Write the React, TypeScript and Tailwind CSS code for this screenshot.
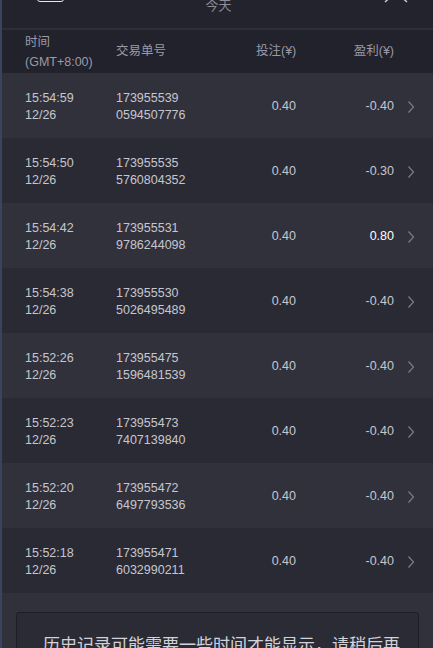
import React from "react";

const rows = [
  { t: "15:54:59", d: "12/26", a: "173955539", b: "0594507776", bet: "0.40", p: "-0.40" },
  { t: "15:54:50", d: "12/26", a: "173955535", b: "5760804352", bet: "0.40", p: "-0.30" },
  { t: "15:54:42", d: "12/26", a: "173955531", b: "9786244098", bet: "0.40", p: "0.80", win: true },
  { t: "15:54:38", d: "12/26", a: "173955530", b: "5026495489", bet: "0.40", p: "-0.40" },
  { t: "15:52:26", d: "12/26", a: "173955475", b: "1596481539", bet: "0.40", p: "-0.40" },
  { t: "15:52:23", d: "12/26", a: "173955473", b: "7407139840", bet: "0.40", p: "-0.40" },
  { t: "15:52:20", d: "12/26", a: "173955472", b: "6497793536", bet: "0.40", p: "-0.40" },
  { t: "15:52:18", d: "12/26", a: "173955471", b: "6032990211", bet: "0.40", p: "-0.40" },
];

const font = { fontFamily: '"Liberation Sans", "Noto Sans CJK SC", sans-serif' };

function Chevron() {
  return (
    <svg width="8" height="14" viewBox="0 0 8 14" className="block">
      <polyline points="1.5,1.5 6.5,7 1.5,12.5" fill="none" stroke="#7c7c88" strokeWidth="1.2" />
    </svg>
  );
}

export default function App() {
  return (
    <div className="w-[433px] h-[648px] overflow-hidden flex bg-[#23232d]" style={font}>
      <div className="w-[2px] shrink-0 bg-[#3a4460]" />
      <div className="flex-1 flex flex-col min-w-0">
        {/* top bar (cut off) */}
        <div className="h-[28px] shrink-0 bg-[#23232d] overflow-hidden relative flex justify-center">
          <div className="absolute left-[35px] top-[-20px] w-[27px] h-[22px] rounded-[3px] border-[1.5px] border-[#e8e8ee]" />
          <div className="text-[13px] leading-[16px] text-[#8c8c98] -mt-[2px] ml-[2px]">今天</div>
          <svg className="absolute left-[381px] top-[-10px]" width="26" height="14" viewBox="0 0 26 14">
            <polyline points="2,12 13,2 24,12" fill="none" stroke="#c8c8d0" strokeWidth="1.5" />
          </svg>
        </div>
        <div className="h-[2px] shrink-0 bg-[#2e2e3a]" />
        {/* column header */}
        <div className="h-[43px] shrink-0 bg-[#22222c] flex items-center pl-[23px] text-[12.5px] text-[#9a9aa6]">
          <div className="w-[91px] leading-[20px]">
            <div>时间</div>
            <div>(GMT+8:00)</div>
          </div>
          <div className="w-[140px]">交易单号</div>
          <div className="w-[40px] text-right whitespace-nowrap">投注(¥)</div>
          <div className="w-[98px] text-right whitespace-nowrap">盈利(¥)</div>
        </div>
        {/* rows */}
        {rows.map((r, i) => (
          <div
            key={i}
            className={`h-[65px] shrink-0 flex items-center pl-[23px] pt-[2px] text-[12.5px] leading-[17px] text-[#c6c6ce] ${
              i % 2 === 0 ? "bg-[#31313c]" : "bg-[#2a2a35]"
            }`}
          >
            <div className="w-[91px]">
              <div>{r.t}</div>
              <div>{r.d}</div>
            </div>
            <div className="w-[140px]">
              <div>{r.a}</div>
              <div>{r.b}</div>
            </div>
            <div className="w-[40px] text-right">{r.bet}</div>
            <div className={`w-[98px] text-right ${r.win ? "text-white" : ""}`}>{r.p}</div>
            <div className="ml-[13px]">
              <Chevron />
            </div>
          </div>
        ))}
        {/* footer notice */}
        <div className="flex-1 bg-[#31313c] pt-[19px] px-[14px]">
          <div className="rounded-[3px] border border-[#1e1e27] bg-[#2b2b36] pt-[20px] pl-[26px] pr-[18px] h-[80px]">
            <div className="text-[17px] leading-[26px] text-[#d2d2da]">
              历史记录可能需要一些时间才能显示，请稍后再试。
            </div>
          </div>
        </div>
      </div>
    </div>
  );
}
